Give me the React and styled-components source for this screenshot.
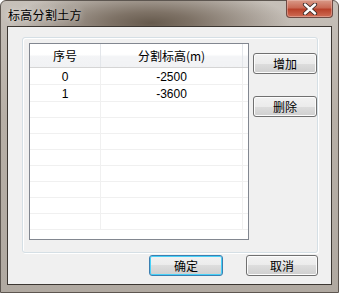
import React from 'react';
import styled, {createGlobalStyle} from 'styled-components';

const rows = [
  {id: '0', level: '-2500'},
  {id: '1', level: '-3600'},
  {}, {}, {}, {}, {}, {}, {}, {},
];

const App = () => {
  return (
    <>
      <GlobalStyle />
      <StyledWindow>
        <StyledTitleBar>
          <StyledTitle>标高分割土方</StyledTitle>
          <StyledClose>
            <svg width="16" height="12" viewBox="0 0 16 12">
              <path d="M3 1.5 L13 10.5 M13 1.5 L3 10.5" stroke="#3b2a28" strokeWidth="4.2" strokeLinecap="round" />
              <path d="M3 1.5 L13 10.5 M13 1.5 L3 10.5" stroke="#ffffff" strokeWidth="2.4" strokeLinecap="round" />
            </svg>
          </StyledClose>
        </StyledTitleBar>
        <StyledClient>
          <StyledGroup>
            <StyledList>
              <StyledTable>
                <thead>
                  <tr>
                    <StyledHead $width={70}>序号</StyledHead>
                    <StyledHead $width={141}>分割标高(m)</StyledHead>
                    <StyledHead />
                  </tr>
                </thead>
                <tbody>
                  {rows.map((row, i) => (
                    <tr key={i}>
                      <StyledCell>{row.id}</StyledCell>
                      <StyledCell>{row.level}</StyledCell>
                      <StyledCell $last />
                    </tr>
                  ))}
                </tbody>
              </StyledTable>
            </StyledList>
            <StyledSide>
              <StyledButton $width={64}>增加</StyledButton>
              <StyledButton $width={64}>删除</StyledButton>
            </StyledSide>
          </StyledGroup>
          <StyledFooter>
            <StyledButton $width={74} $primary>确定</StyledButton>
            <StyledButton $width={72}>取消</StyledButton>
          </StyledFooter>
        </StyledClient>
      </StyledWindow>
    </>
  );
};

const GlobalStyle = createGlobalStyle`
  body {
    margin: 0;
    background: #fff;
    font-family: "Liberation Sans", "Noto Sans CJK SC", sans-serif;
    font-size: 12px;
  }
`;
const StyledWindow = styled.div`
  width: 339px;
  height: 293px;
  box-sizing: border-box;
  display: flex;
  flex-direction: column;
  padding: 0 6px 7px 6px;
  background:
    radial-gradient(ellipse 140px 36px at 150px 22px, #665a4d 0%, #7e7266 30%, rgba(180, 172, 162, 0) 100%),
    linear-gradient(180deg, #c6c0b9 0%, #b7afa6 40%, #b0a9a1 100%);
  border: 1px solid #5d5650;
  border-radius: 6px 6px 0 0;
`;
const StyledTitleBar = styled.div`
  height: 26px;
  display: flex;
  align-items: flex-start;
  justify-content: space-between;
`;
const StyledTitle = styled.div`
  margin: 6px 0 0 1px;
  font-family: "Noto Sans CJK SC", sans-serif;
  font-size: 12px;
  line-height: 16px;
  letter-spacing: 0.3px;
  color: #000;
  text-shadow: 0 0 6px rgba(255, 255, 255, 0.8);
`;
const StyledClose = styled.div`
  width: 47px;
  height: 18px;
  margin-top: -1px;
  margin-right: -1px;
  box-sizing: border-box;
  display: flex;
  align-items: center;
  justify-content: center;
  border: 1px solid #6e4a43;
  border-top: none;
  border-radius: 0 0 4px 4px;
  background: linear-gradient(180deg, #d99a88 0%, #c96a55 45%, #b8412a 55%, #cf6c55 100%);
  box-shadow: inset 0 0 0 1px rgba(240, 200, 190, 0.45);
`;
const StyledClient = styled.div`
  flex: 1;
  display: flex;
  flex-direction: column;
  background: #f0f0f0;
  border: 1px solid #3c3732;
  padding: 10px 13px 8px 14px;
`;
const StyledGroup = styled.div`
  height: 216px;
  box-sizing: border-box;
  display: flex;
  align-items: flex-start;
  gap: 4px;
  padding: 5px 0 0 6px;
  border: 1px solid #d5dfe5;
  border-radius: 3px;
  box-shadow: inset 1px 1px 0 #fff, 1px 1px 0 #fff;
`;
const StyledList = styled.div`
  width: 222px;
  height: 197px;
  box-sizing: border-box;
  border: 1px solid #828790;
  background: #fff;
  overflow: hidden;
`;
const StyledTable = styled.table`
  border-collapse: collapse;
  table-layout: fixed;
  width: 220px;
  font-family: "Liberation Sans", "Noto Sans CJK SC", sans-serif;
  font-size: 12px;
  color: #000;
`;
const StyledHead = styled.th`
  width: ${(p) => (p.$width ? `${p.$width}px` : 'auto')};
  height: 23px;
  padding: 0;
  font-weight: normal;
  font-family: "Noto Sans CJK SC", sans-serif;
  text-align: center;
  background: linear-gradient(180deg, #ffffff 0%, #ffffff 45%, #f3f4f6 55%, #f1f2f4 100%);
  border-right: 1px solid #e3e6ea;
  border-bottom: 1px solid #d5d5d5;
  &:last-child {
    border-right: none;
  }
`;
const StyledCell = styled.td`
  height: 16px;
  box-sizing: border-box;
  padding: 2px 0 0;
  line-height: 14px;
  text-align: center;
  border-right: ${(p) => (p.$last ? 'none' : '1px solid #f0f0f0')};
  border-bottom: 1px solid #f0f0f0;
`;
const StyledSide = styled.div`
  display: flex;
  flex-direction: column;
  gap: 22px;
  padding-top: 10px;
`;
const StyledButton = styled.button`
  width: ${(p) => p.$width}px;
  height: 21px;
  box-sizing: border-box;
  padding: 0;
  font-family: "Noto Sans CJK SC", sans-serif;
  font-size: 12px;
  line-height: 17px;
  color: #000;
  border: 1px solid ${(p) => (p.$primary ? '#3c7fb1' : '#707070')};
  border-radius: 3px;
  background: linear-gradient(180deg, #f2f2f2 0%, #ebebeb 50%, #dddddd 50%, #cfcfcf 100%);
  box-shadow: inset 0 0 0 1px ${(p) => (p.$primary ? '#48d1f8' : '#fcfcfc')};
`;
const StyledFooter = styled.div`
  display: flex;
  justify-content: flex-end;
  gap: 23px;
  margin-top: 2px;
`;

export default App;
